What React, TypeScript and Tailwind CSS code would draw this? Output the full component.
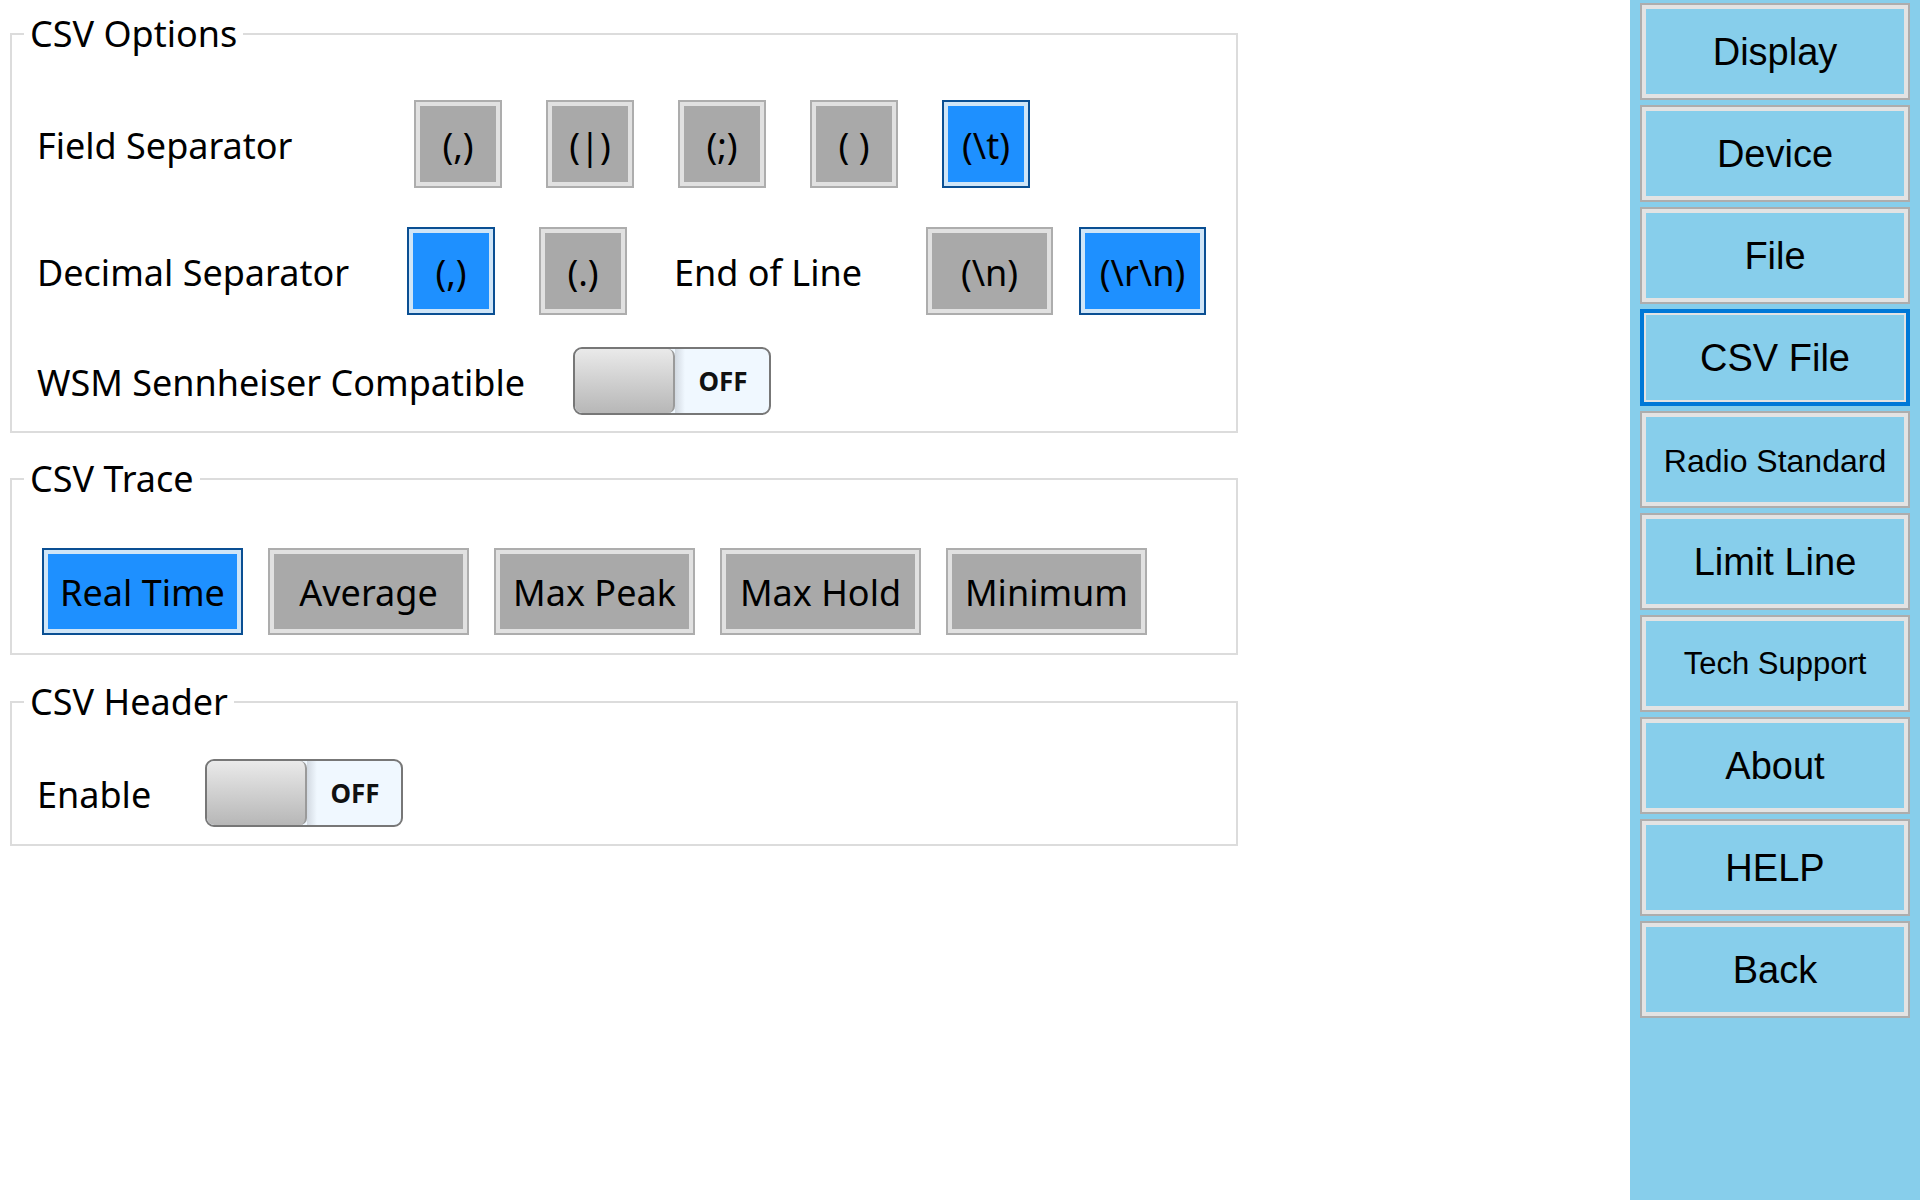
import React from "react";

function OptBtn({ label, selected, w, h }: { label: string; selected?: boolean; w: string; h: string }) {
  return (
    <div
      className={`${w} ${h} ${
        selected
          ? "border-[#0a4f93] bg-[#1e90ff] shadow-[inset_0_0_0_4px_#cfe5f7]"
          : "border-[#adadad] bg-[#a9a9a9] shadow-[inset_0_0_0_4px_#e1e1e1]"
      } flex shrink-0 items-center justify-center border-2 pt-[3px] text-[36px] text-black`}
    >
      {label}
    </div>
  );
}

function Toggle() {
  return (
    <div className="flex h-[68px] w-[198px] shrink-0 overflow-hidden rounded-[9px] border-2 border-[#777777] bg-[#f0f8ff]">
      <div className="h-full w-[100px] rounded-[7px] border-r-2 border-[#9a9a9a] bg-linear-to-b from-[#eaeaea] to-[#b7b7b7]" />
      <div className="w-[10px] bg-linear-to-r from-[#d2d9e1] to-[#f0f8ff]" />
      <div className="flex flex-1 items-center justify-center pr-[8px] text-[26px] font-bold text-[#111111]">OFF</div>
    </div>
  );
}

function Legend({ children }: { children: React.ReactNode }) {
  return <legend className="ml-[12px] px-[6px] text-[36px] leading-[40px] text-black">{children}</legend>;
}

function SideBtn({ label, selected, size }: { label: string; selected?: boolean; size: string }) {
  return (
    <div
      className={`${
        selected
          ? "border-4 border-[#0078d7] shadow-[inset_0_0_0_2px_#e3e3e3]"
          : "border-2 border-[#adadad] shadow-[inset_0_0_0_4px_#e3e3e3]"
      } ${size} flex h-[97px] shrink-0 items-center justify-center bg-[#87ceeb] pt-[2px] text-black`}
    >
      {label}
    </div>
  );
}

export default function App() {
  return (
    <div className="flex h-[1200px] w-[1920px] overflow-hidden bg-white">
      <div className="flex w-[1630px] shrink-0 flex-col font-['Noto_Sans',sans-serif] text-black">
        {/* CSV Options */}
        <fieldset className="ml-[10px] mt-[14px] w-[1228px] border-2 border-[#dcdcdc]">
          <Legend>CSV Options</Legend>
          <div className="flex flex-col pb-[16px] pl-[25px] pt-[46px]">
            <div className="flex h-[88px] items-center">
              <div className="w-[377px] shrink-0 pt-[4px] text-[36px]">Field Separator</div>
              <div className="flex gap-[44px]">
                <OptBtn label="(,)" w="w-[88px]" h="h-[88px]" />
                <OptBtn label="(|)" w="w-[88px]" h="h-[88px]" />
                <OptBtn label="(;)" w="w-[88px]" h="h-[88px]" />
                <OptBtn label="( )" w="w-[88px]" h="h-[88px]" />
                <OptBtn label={"(\\t)"} selected w="w-[88px]" h="h-[88px]" />
              </div>
            </div>
            <div className="mt-[39px] flex h-[88px] items-center">
              <div className="w-[370px] shrink-0 pt-[4px] text-[36px]">Decimal Separator</div>
              <OptBtn label="(,)" selected w="w-[88px]" h="h-[88px]" />
              <div className="ml-[44px]">
                <OptBtn label="(.)" w="w-[88px]" h="h-[88px]" />
              </div>
              <div className="ml-[47px] w-[252px] shrink-0 pt-[4px] text-[36px]">End of Line</div>
              <OptBtn label={"(\\n)"} w="w-[127px]" h="h-[88px]" />
              <div className="ml-[26px]">
                <OptBtn label={"(\\r\\n)"} selected w="w-[127px]" h="h-[88px]" />
              </div>
            </div>
            <div className="mt-[32px] flex h-[68px] items-center">
              <div className="w-[536px] shrink-0 pt-[4px] text-[36px]">WSM Sennheiser Compatible</div>
              <Toggle />
            </div>
          </div>
        </fieldset>

        {/* CSV Trace */}
        <fieldset className="ml-[10px] mt-[26px] w-[1228px] border-2 border-[#dcdcdc]">
          <Legend>CSV Trace</Legend>
          <div className="flex gap-[25px] pb-[18px] pl-[30px] pt-[49px]">
            <OptBtn label="Real Time" selected w="w-[201px]" h="h-[87px]" />
            <OptBtn label="Average" w="w-[201px]" h="h-[87px]" />
            <OptBtn label="Max Peak" w="w-[201px]" h="h-[87px]" />
            <OptBtn label="Max Hold" w="w-[201px]" h="h-[87px]" />
            <OptBtn label="Minimum" w="w-[201px]" h="h-[87px]" />
          </div>
        </fieldset>

        {/* CSV Header */}
        <fieldset className="ml-[10px] mt-[27px] w-[1228px] border-2 border-[#dcdcdc]">
          <Legend>CSV Header</Legend>
          <div className="flex h-[68px] items-center box-content pb-[17px] pl-[25px] pt-[37px]">
            <div className="w-[168px] shrink-0 pt-[4px] text-[36px]">Enable</div>
            <Toggle />
          </div>
        </fieldset>
      </div>

      <div className="flex w-[290px] shrink-0 flex-col gap-[5px] bg-[#87ceeb] px-[10px] pt-[3px] font-['Liberation_Sans',Arial,sans-serif]">
        <SideBtn label="Display" size="text-[38px]" />
        <SideBtn label="Device" size="text-[38px]" />
        <SideBtn label="File" size="text-[38px]" />
        <SideBtn label="CSV File" selected size="text-[38px]" />
        <SideBtn label="Radio Standard" size="text-[32px]" />
        <SideBtn label="Limit Line" size="text-[38px]" />
        <SideBtn label="Tech Support" size="text-[31px]" />
        <SideBtn label="About" size="text-[38px]" />
        <SideBtn label="HELP" size="text-[38px]" />
        <SideBtn label="Back" size="text-[38px]" />
      </div>
    </div>
  );
}
